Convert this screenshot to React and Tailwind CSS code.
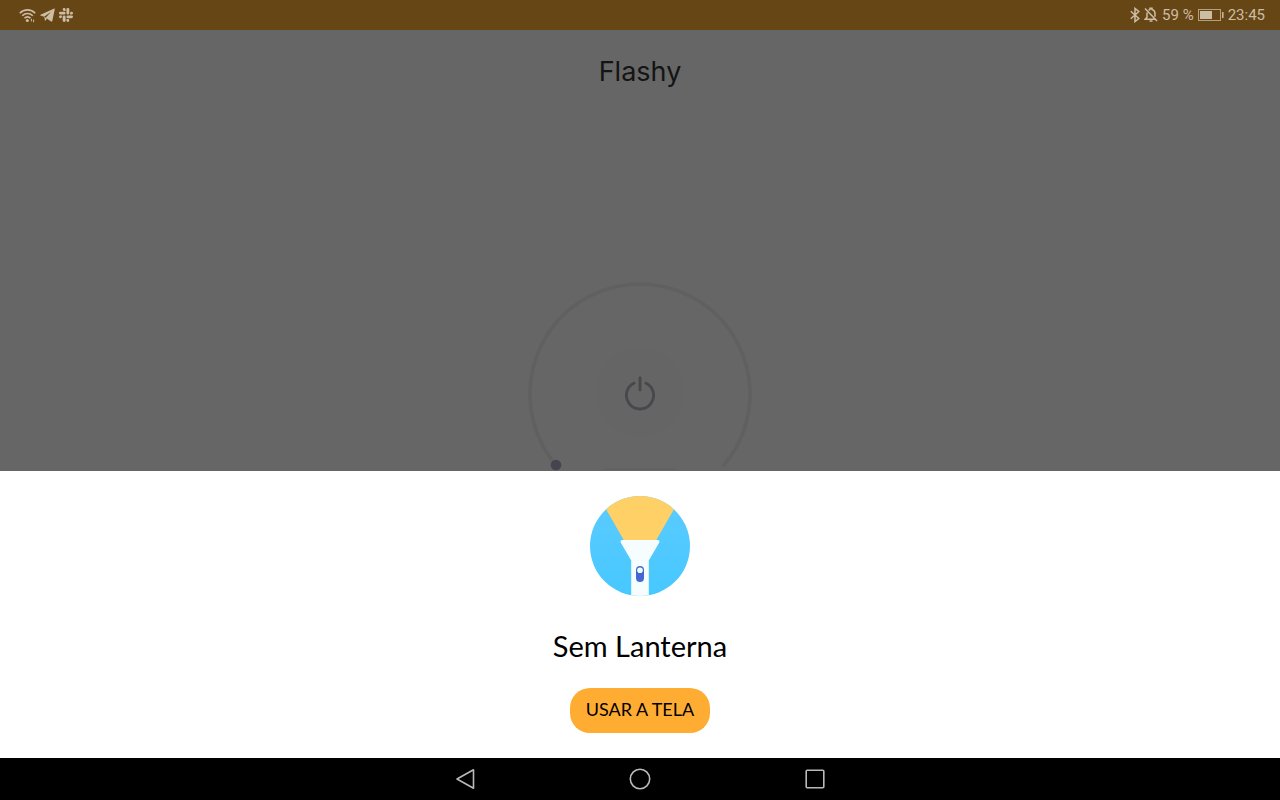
import React from "react";

function WifiIcon() {
  return (
    <svg width="17" height="15" viewBox="0 0 17 15" fill="none" stroke="currentColor" strokeWidth="1.6" aria-hidden="true">
      <path d="M0.8 5.2C5 0.8 12 0.8 16.2 5.2" />
      <path d="M3.2 7.8C6.2 4.8 10.8 4.8 13.8 7.8" />
      <path d="M5.5 10.2C7.2 8.4 9.8 8.4 11.5 10.2" />
      <circle cx="8.3" cy="12.4" r="1.5" fill="currentColor" stroke="none" />
      <path d="M12.4 10.8v2.600M14.600 11.600v2.600" strokeWidth="1" />
    </svg>
  );
}

function TelegramIcon() {
  return (
    <svg width="15" height="14" viewBox="0 0 15 14" fill="currentColor" aria-hidden="true">
      <path d="M14.3 0.5 0.5 6.7c-.5.3-.4.7.1.9l3.5 1.2 7-5.1-5.4 6 5.4 3.8c.6.3 1 .1 1.2-.6L14.8 1.1c.1-.5-.1-.7-.5-.6Z" />
      <path d="M4.3 8.8 5 13l2-2.2-1.6-1.2Z" />
    </svg>
  );
}

function SlackIcon() {
  return (
    <svg width="14" height="14" viewBox="0 0 24 24" fill="currentColor" aria-hidden="true">
      <path d="M5 15.2a2.5 2.5 0 1 1-2.5-2.5H5Zm1.3 0a2.5 2.5 0 0 1 5 0v6.3a2.5 2.5 0 1 1-5 0ZM8.8 5a2.5 2.5 0 1 1 2.5-2.5V5Zm0 1.3a2.5 2.5 0 0 1 0 5H2.5a2.5 2.5 0 1 1 0-5ZM19 8.8a2.5 2.5 0 1 1 2.5 2.5H19Zm-1.3 0a2.5 2.5 0 0 1-5 0V2.5a2.5 2.5 0 1 1 5 0ZM15.2 19a2.5 2.5 0 1 1-2.5 2.5V19Zm0-1.3a2.5 2.5 0 0 1 0-5h6.3a2.5 2.5 0 1 1 0 5Z" />
    </svg>
  );
}

function BluetoothIcon() {
  return (
    <svg width="10" height="16" viewBox="0 0 10 16" fill="none" stroke="currentColor" strokeWidth="1.5" aria-hidden="true">
      <path d="M0.8 4.3 8.8 11.5 5 14.6V1.4L8.8 4.5 0.8 11.7" />
    </svg>
  );
}

function BellOffIcon() {
  return (
    <svg width="14" height="16" viewBox="0 0 14 16" fill="none" stroke="currentColor" strokeWidth="1.5" aria-hidden="true">
      <path d="M1 1.5 13 14M3 5.5v4.7L1.2 12.3H11M4.5 3.2C5 2.700 5.600 2.500 6 2.400V1.300h2v1.100c2 .5 3 2 3 4v3.300" />
      <path d="M5.5 14h3" />
    </svg>
  );
}

function BatteryIcon() {
  return (
    <svg width="26" height="12" viewBox="0 0 26 12" fill="none" stroke="currentColor" aria-hidden="true">
      <rect x="0.5" y="0.5" width="22" height="11" strokeOpacity="0.75" />
      <rect x="2" y="2" width="12" height="8" fill="currentColor" stroke="none" />
      <path d="M24.8 3v6" strokeWidth="1.5" />
    </svg>
  );
}

function StatusBar() {
  return (
    <header className="flex h-[30px] shrink-0 items-center justify-between bg-[#664615] pr-[15px] pl-[19px] font-['Roboto',sans-serif] text-[15px] leading-5 text-[#cdbda5]">
      <div className="flex items-center gap-1">
        <WifiIcon />
        <TelegramIcon />
        <SlackIcon />
      </div>
      <div className="flex items-center gap-1">
        <BluetoothIcon />
        <BellOffIcon />
        <span>59 %</span>
        <BatteryIcon />
        <time>23:45</time>
      </div>
    </header>
  );
}

function Dial() {
  return (
    <div className="mx-auto mt-auto grid h-[190px] w-[224px] justify-items-center">
      <svg className="col-start-1 row-start-1" width="224" height="190" viewBox="0 0 224 190" fill="none" aria-hidden="true">
        <path d="M28 184A110 110 0 1 1 196 184" stroke="#606060" strokeWidth="3.5" strokeLinecap="round" />
        <path d="M77 188h70" stroke="#626262" strokeWidth="2" />
        <circle cx="28" cy="184" r="5.3" fill="#45444f" />
      </svg>
      <button
        type="button"
        aria-label="Power"
        className="col-start-1 row-start-1 mt-[68px] flex size-[88px] items-center justify-center rounded-full bg-[#656565] text-[#48474d]"
      >
        <svg width="32" height="36" viewBox="0 0 32 36" fill="none" stroke="currentColor" strokeWidth="2.8" strokeLinecap="round" aria-hidden="true">
          <path d="M16 2.8V15" />
          <path d="M10.2 8.1A13.6 13.6 0 1 0 21.8 8.1" />
        </svg>
      </button>
    </div>
  );
}

function FlashlightLogo() {
  return (
    <svg width="100" height="100" viewBox="0 0 100 100" aria-hidden="true">
      <defs>
        <clipPath id="disc">
          <circle cx="50" cy="50" r="50" />
        </clipPath>
        <linearGradient id="sky" x1="0" y1="0" x2="0" y2="1">
          <stop offset="0" stopColor="#5ccbff" />
          <stop offset="1" stopColor="#46c8ff" />
        </linearGradient>
      </defs>
      <g clipPath="url(#disc)">
        <rect width="100" height="100" fill="url(#sky)" />
        <path d="M8 0 16.5 14 34 44.500H66L83.5 14 92 0Z" fill="#ffd065" />
        <path d="M32.5 44h35c2 0 2.500 1.500 1.500 3L58.800 64.500V100H41.200V64.500L31 47c-1-1.500-.5-3 1.500-3Z" fill="#f5fdff" />
        <rect x="46" y="70" width="8" height="16" rx="4" fill="#4169d3" />
        <circle cx="50" cy="74.3" r="2.8" fill="#f5fdff" />
      </g>
    </svg>
  );
}

function NoFlashlightSheet() {
  return (
    <section aria-labelledby="sheet-title" className="flex shrink-0 flex-col items-center bg-white py-[25px] font-['Lato',sans-serif] text-black">
      <FlashlightLogo />
      <h2 id="sheet-title" className="mt-[30px] text-[29px] leading-10">
        Sem Lanterna
      </h2>
      <button type="button" className="mt-[22px] h-[45px] rounded-[20px] bg-[#ffac33] px-4 pb-1 text-[18px] leading-6">
        USAR A TELA
      </button>
    </section>
  );
}

function NavigationBar() {
  return (
    <nav className="flex h-[42px] shrink-0 items-center justify-center gap-[151px] bg-black text-[#b9b9b9]">
      <button type="button" aria-label="Back">
        <svg width="24" height="24" viewBox="0 0 24 24" fill="none" stroke="currentColor" strokeWidth="1.6" strokeLinejoin="round">
          <path d="M20.5 2.8V21.2L4 12Z" />
        </svg>
      </button>
      <button type="button" aria-label="Home">
        <svg width="24" height="24" viewBox="0 0 24 24" fill="none" stroke="currentColor" strokeWidth="1.6">
          <circle cx="12" cy="12" r="9.7" />
        </svg>
      </button>
      <button type="button" aria-label="Recent apps">
        <svg width="24" height="24" viewBox="0 0 24 24" fill="none" stroke="currentColor" strokeWidth="1.6">
          <rect x="3.2" y="3.2" width="17.6" height="17.6" rx="1" />
        </svg>
      </button>
    </nav>
  );
}

export default function App() {
  return (
    <div className="flex min-h-screen flex-col bg-[#666666]">
      <StatusBar />
      <main className="flex flex-1 flex-col">
        <h1 className="mt-6 text-center font-['Inter',sans-serif] text-[27px] leading-9 text-[#141414]">Flashy</h1>
        <Dial />
      </main>
      <NoFlashlightSheet />
      <NavigationBar />
    </div>
  );
}
